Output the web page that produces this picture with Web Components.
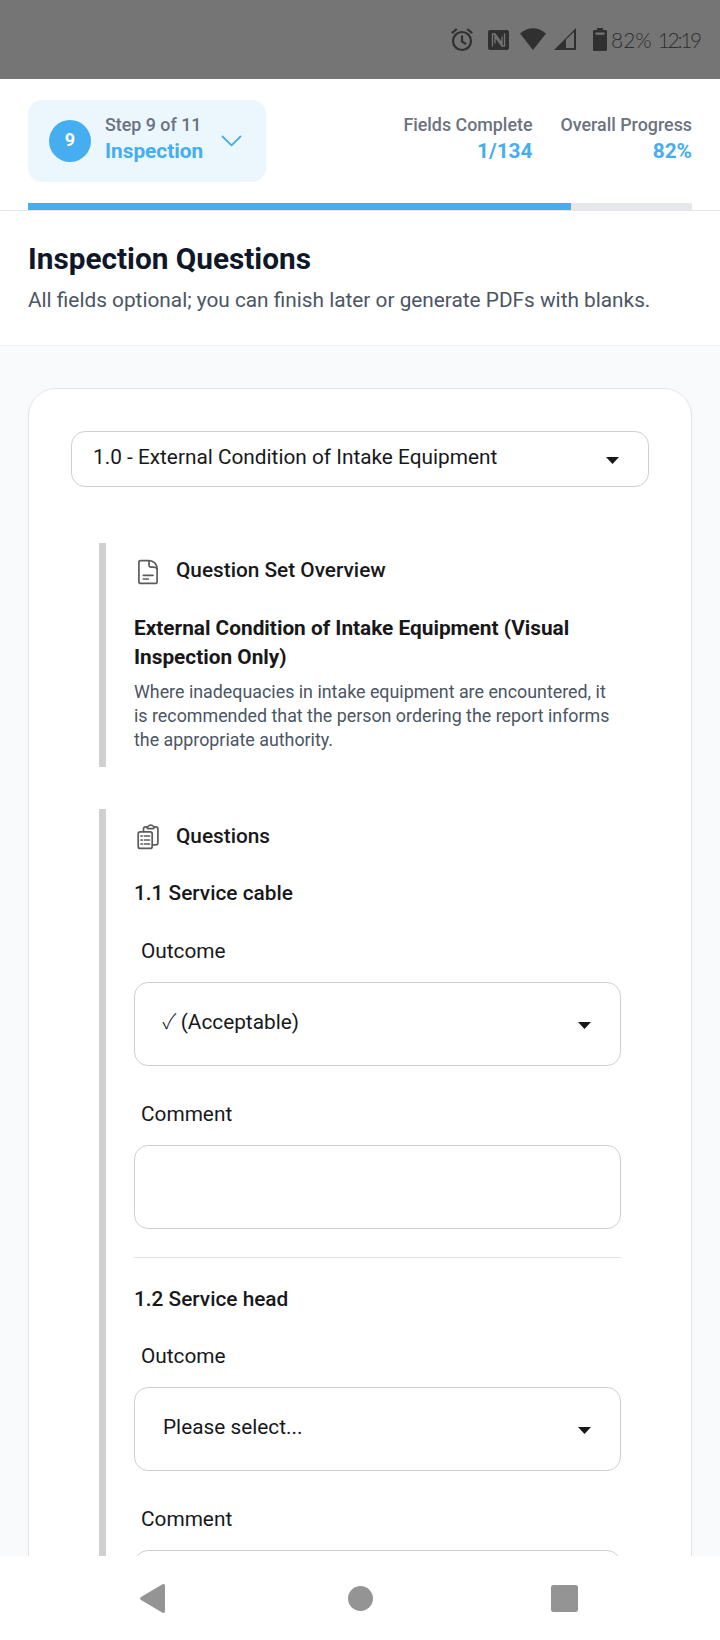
<!DOCTYPE html>
<html lang="en">
<head>
<meta charset="utf-8">
<title>Inspection Questions</title>
<style>
    body {
        margin: 0;
        height: 1640px;
        overflow: hidden;
        display: flex;
        flex-direction: column;
        background: #fff;
        font: 20.8px/28px Roboto, "Liberation Sans", sans-serif;
        color: #18181b;
    }

    main {
        flex: 1;
        min-height: 0;
        overflow: hidden;
        background: #f8fafc;
        padding: 42px 28px 0;
    }

    .check {
        margin-left: -.5px;
        font-family: "Noto Sans CJK JP", sans-serif;
        font-weight: 300;
        line-height: 0;
        letter-spacing: -.7px;
    }
</style>
</head>
<body>
    <status-bar battery="82%" time="12:19"></status-bar>
    <step-header step="9" total="11" name="Inspection">
        <header-stat label="Fields Complete">1/134</header-stat>
        <header-stat label="Overall Progress">82%</header-stat>
    </step-header>
    <page-title>
        Inspection Questions
        <span slot="subtitle">All fields optional; you can finish later or generate PDFs with blanks.</span>
    </page-title>
    <main>
        <form-card>
            <select-box compact>1.0 - External Condition of Intake Equipment</select-box>
            <side-panel label="Question Set Overview" icon="document">
                <set-overview label="External Condition of Intake Equipment (Visual Inspection Only)">
                    Where inadequacies in intake equipment are encountered, it is recommended that the person ordering the report informs the appropriate authority.
                </set-overview>
            </side-panel>
            <side-panel label="Questions" icon="clipboard">
                <question-item label="1.1 Service cable">
                    <form-field label="Outcome"><select-box><span class="check">✓</span> (Acceptable)</select-box></form-field>
                    <form-field label="Comment"><text-box></text-box></form-field>
                </question-item>
                <question-item label="1.2 Service head">
                    <form-field label="Outcome"><select-box>Please select...</select-box></form-field>
                    <form-field label="Comment"><text-box></text-box></form-field>
                </question-item>
            </side-panel>
        </form-card>
    </main>
    <nav-bar></nav-bar>

<script>
class BaseElement extends HTMLElement {
    constructor() {
        super()
        this.attachShadow({ mode: "open" })
        this.shadowRoot.innerHTML = this.render()
    }

    attr(name) {
        return this.getAttribute(name) || ""
    }
}

class StatusBar extends BaseElement {
    render() {
        return /*html*/ `
            <style>
                :host {
                    flex: none;
                    display: flex;
                    justify-content: flex-end;
                    box-sizing: border-box;
                    height: 79px;
                    padding: 26px 20px 0 0;
                    background: #757575;
                    color: #303030;
                    font: 300 21px/28px Lato, Roboto, sans-serif;
                }

                svg {
                    display: block;
                    width: 156px;
                    height: 28px;
                    margin-right: 4px;
                }

                .time {
                    margin-left: 6px;
                    letter-spacing: -2.3px;
                }
            </style>

            <svg viewBox="451 26 156 28" fill="currentColor">
                <g fill="none" stroke="currentColor" stroke-width="2.2">
                    <circle cx="462" cy="41" r="9"/>
                    <path d="M462 35.5v6l4 2.6M451.8 33.2l5-4.2M472.2 33.2l-5-4.2"/>
                </g>
                <rect x="488" y="30" width="21" height="20" rx="2"/>
                <path d="M492.500 46.500V34h2.500l7 9.500V36.500M504.500 33.500V46h-2.500l-7-9.500V43.500" fill="none" stroke="#757575" stroke-width="1.300"/>
                <path d="M520 33.500Q533 23 546 33.500L533 50z"/>
                <path d="M554 50L576 28V50zM566 39.500V48h8V32z" fill-rule="evenodd"/>
                <path d="M597 28h6v2h2.500q1.500 0 1.500 1.500v18q0 1.500-1.500 1.500h-11q-1.500 0-1.500-1.500v-18q0-1.500 1.500-1.500h2.500zM595.500 32.500v2.200h9v-2.200z" fill-rule="evenodd"/>
            </svg>
            <span>${this.attr("battery")}</span>
            <span class="time">${this.attr("time")}</span>
        `
    }
}

class StepHeader extends BaseElement {
    render() {
        const step = this.attr("step")
        const total = this.attr("total")

        return /*html*/ `
            <style>
                :host {
                    flex: none;
                    display: block;
                    padding: 21px 28px 0;
                    border-bottom: 1px solid #e5e7eb;
                }

                .top {
                    display: flex;
                    height: 82px;
                    margin-bottom: 21px;
                }

                .chip {
                    display: flex;
                    align-items: center;
                    box-sizing: border-box;
                    width: 238px;
                    padding: 0 22.5px 0 21px;
                    background: #ebf6fd;
                    border-radius: 14px;
                }

                .badge {
                    width: 42px;
                    height: 42px;
                    margin-right: 14px;
                    border-radius: 50%;
                    background: #45aef0;
                    color: #fff;
                    font-weight: 700;
                    font-size: 18px;
                    line-height: 40px;
                    text-align: center;
                }

                .text {
                    flex: 1;
                    margin-top: -4px;
                    white-space: nowrap;
                }

                .step {
                    font-size: 17.85px;
                    font-weight: 500;
                    line-height: 24px;
                    color: #6b7280;
                }

                .name {
                    font-weight: 700;
                    color: #45aef0;
                }

                svg {
                    flex: none;
                    width: 24px;
                    height: 24px;
                    color: #45aef0;
                }

                .stats {
                    display: flex;
                    flex: 1;
                    justify-content: flex-end;
                    gap: 28px;
                    padding-top: 13px;
                }

                .track {
                    height: 7px;
                    background: #e5e7eb;
                }

                .fill {
                    height: 7px;
                    background: #45aef0;
                }
            </style>

            <div class="top">
                <div class="chip">
                    <div class="badge">${step}</div>
                    <div class="text">
                        <div class="step">Step ${step} of ${total}</div>
                        <div class="name">${this.attr("name")}</div>
                    </div>
                    <svg viewBox="0 0 24 24" fill="none" stroke="currentColor" stroke-width="1.8" stroke-linecap="round" stroke-linejoin="round">
                        <path d="M2.500 7.500L11.500 16.300L20.500 7.500"/>
                    </svg>
                </div>
                <div class="stats"><slot></slot></div>
            </div>
            <div class="track"><div class="fill" style="width: ${(step / total) * 100}%"></div></div>
        `
    }
}

class HeaderStat extends BaseElement {
    render() {
        return /*html*/ `
            <style>
                :host {
                    display: block;
                    text-align: right;
                    white-space: nowrap;
                    font-weight: 700;
                    color: #45aef0;
                }

                .label {
                    font-size: 17.85px;
                    font-weight: 500;
                    line-height: 24px;
                    color: #6b7280;
                }
            </style>

            <div class="label">${this.attr("label")}</div>
            <slot></slot>
        `
    }
}

class PageTitle extends BaseElement {
    render() {
        return /*html*/ `
            <style>
                :host {
                    flex: none;
                    display: block;
                    box-sizing: border-box;
                    height: 135px;
                    padding: 27px 28px 0;
                    border-bottom: 1px solid #f0f1f3;
                    white-space: nowrap;
                }

                h1 {
                    margin: 0 0 7px;
                    font-size: 29.75px;
                    line-height: 41px;
                    font-weight: 700;
                    color: #0f172a;
                }

                p {
                    margin: 0;
                    color: #4b5563;
                }
            </style>

            <h1><slot></slot></h1>
            <p><slot name="subtitle"></slot></p>
        `
    }
}

class FormCard extends BaseElement {
    render() {
        return /*html*/ `
            <style>
                :host {
                    display: flex;
                    flex-direction: column;
                    box-sizing: border-box;
                    min-height: 1400px;
                    padding: 42px;
                    background: #fff;
                    border: 1px solid #e2e5ea;
                    border-radius: 28px;
                    box-shadow: 0 1px 3px rgba(0, 0, 0, .04);
                }
            </style>

            <slot></slot>
        `
    }
}

class SelectBox extends BaseElement {
    render() {
        return /*html*/ `
            <style>
                :host {
                    display: flex;
                    align-items: center;
                    justify-content: space-between;
                    box-sizing: border-box;
                    height: 84px;
                    padding: 0 29px 5px 28px;
                    border: 1px solid #cfcfcf;
                    border-radius: 14px;
                    background: #fff;
                    white-space: nowrap;
                }

                :host([compact]) {
                    height: 56px;
                    margin-bottom: 56px;
                    padding-left: 21px;
                }

                svg {
                    width: 13px;
                    height: 7px;
                    margin-top: 7px;
                }
            </style>

            <span><slot></slot></span>
            <svg viewBox="0 0 13 7"><path d="M0 0H13L6.500 7z" fill="#18181b"/></svg>
        `
    }
}

class TextBox extends BaseElement {
    render() {
        return /*html*/ `
            <style>
                :host {
                    display: block;
                    box-sizing: border-box;
                    height: 84px;
                    border: 1px solid #cfcfcf;
                    border-radius: 14px;
                    background: #fff;
                }
            </style>
        `
    }
}

const ICONS = {
    document: `
        <path d="M15 2.600H6.700Q4.900 2.600 4.900 4.400V23.700Q4.900 25.400 6.700 25.400H21.300Q23.100 25.400 23.100 23.700V10.500C23.100 6 19.500 2.600 15 2.600z"/>
        <path d="M15 2.800V6.800Q15 9.200 17.400 9.200H19.500Q22.500 9.200 23 11M9.300 17.300H19M9.300 21H14.300"/>`,
    clipboard: `
        <rect x="4.200" y="7.800" width="14" height="16.600" rx="2"/>
        <path d="M9.500 7.500V5Q9.500 2.900 11.600 2.900H13M20.500 2.900H21.800Q23.900 2.900 23.900 5V18.800Q23.900 20.900 21.800 20.900H18.500"/>
        <path d="M13 2.900Q14.300 2.900 14.600 2T16.700 1Q18.500 1 18.900 2T20.500 2.900Q20.500 4.700 18.700 4.700H14.800Q13 4.700 13 2.900zM10.500 12H15.500M10.500 16H15.500M10.500 20H15.500M7 12H8.300M7 16H8.300M7 20H8.300"/>`
}

class SidePanel extends BaseElement {
    render() {
        return /*html*/ `
            <style>
                :host {
                    display: block;
                    margin: 0 28px 42px;
                    padding: 13px 0 15px 28px;
                    border-left: 7px solid #d0d0d0;
                }

                header {
                    display: flex;
                    gap: 14px;
                    margin-bottom: 29px;
                    font-weight: 500;
                }

                svg {
                    width: 28px;
                    height: 28px;
                    margin: 2px 0 -2px;
                    overflow: visible;
                }
            </style>

            <header>
                <svg viewBox="0 0 28 28" fill="none" stroke="#5c5c5c" stroke-width="1.700" stroke-linecap="round">${ICONS[this.attr("icon")]}</svg>
                <span>${this.attr("label")}</span>
            </header>
            <slot></slot>
        `
    }
}

class SetOverview extends BaseElement {
    render() {
        return /*html*/ `
            <style>
                :host {
                    display: block;
                    font-size: 17.85px;
                    line-height: 24px;
                    color: #4b5563;
                }

                h2 {
                    margin: 0 0 8px;
                    padding-top: 1px;
                    font-size: 20.8px;
                    line-height: 29px;
                    font-weight: 700;
                    color: #18181b;
                }
            </style>

            <h2>${this.attr("label")}</h2>
            <slot></slot>
        `
    }
}

class QuestionItem extends BaseElement {
    render() {
        return /*html*/ `
            <style>
                :host {
                    display: block;
                    padding-bottom: 28px;
                    margin-bottom: 27px;
                    border-bottom: 1px solid #e2e2e2;
                }

                h3 {
                    margin: 0 0 30px;
                    font-size: 20.8px;
                    font-weight: 500;
                }

                :host(:last-of-type) h3 {
                    margin-bottom: 29px;
                }

                .fields {
                    display: flex;
                    flex-direction: column;
                    gap: 34px;
                }
            </style>

            <h3>${this.attr("label")}</h3>
            <div class="fields"><slot></slot></div>
        `
    }
}

class FormField extends BaseElement {
    render() {
        return /*html*/ `
            <style>
                :host {
                    display: block;
                }

                label {
                    display: block;
                    margin-bottom: 17px;
                    padding-left: 7px;
                }
            </style>

            <label>${this.attr("label")}</label>
            <slot></slot>
        `
    }
}

class NavBar extends BaseElement {
    render() {
        return /*html*/ `
            <style>
                :host {
                    flex: none;
                    display: flex;
                    align-items: center;
                    justify-content: space-between;
                    box-sizing: border-box;
                    height: 84px;
                    padding: 0 142px 0 140px;
                    background: #fff;
                }

                svg {
                    fill: #949494;
                }

                .home {
                    margin-left: 5px;
                }
            </style>

            <svg width="25" height="29"><path d="M22.500.3Q25-.5 25 2V27Q25 29.500 22.500 28.700L1 16Q-.8 14.500 1 13z"/></svg>
            <svg class="home" width="25" height="25"><circle cx="12.500" cy="12.500" r="12.500"/></svg>
            <svg width="27" height="27"><rect width="27" height="27" rx="2.500"/></svg>
        `
    }
}

customElements.define("status-bar", StatusBar)
customElements.define("step-header", StepHeader)
customElements.define("header-stat", HeaderStat)
customElements.define("page-title", PageTitle)
customElements.define("form-card", FormCard)
customElements.define("select-box", SelectBox)
customElements.define("text-box", TextBox)
customElements.define("side-panel", SidePanel)
customElements.define("set-overview", SetOverview)
customElements.define("question-item", QuestionItem)
customElements.define("form-field", FormField)
customElements.define("nav-bar", NavBar)
</script>
</body>
</html>
